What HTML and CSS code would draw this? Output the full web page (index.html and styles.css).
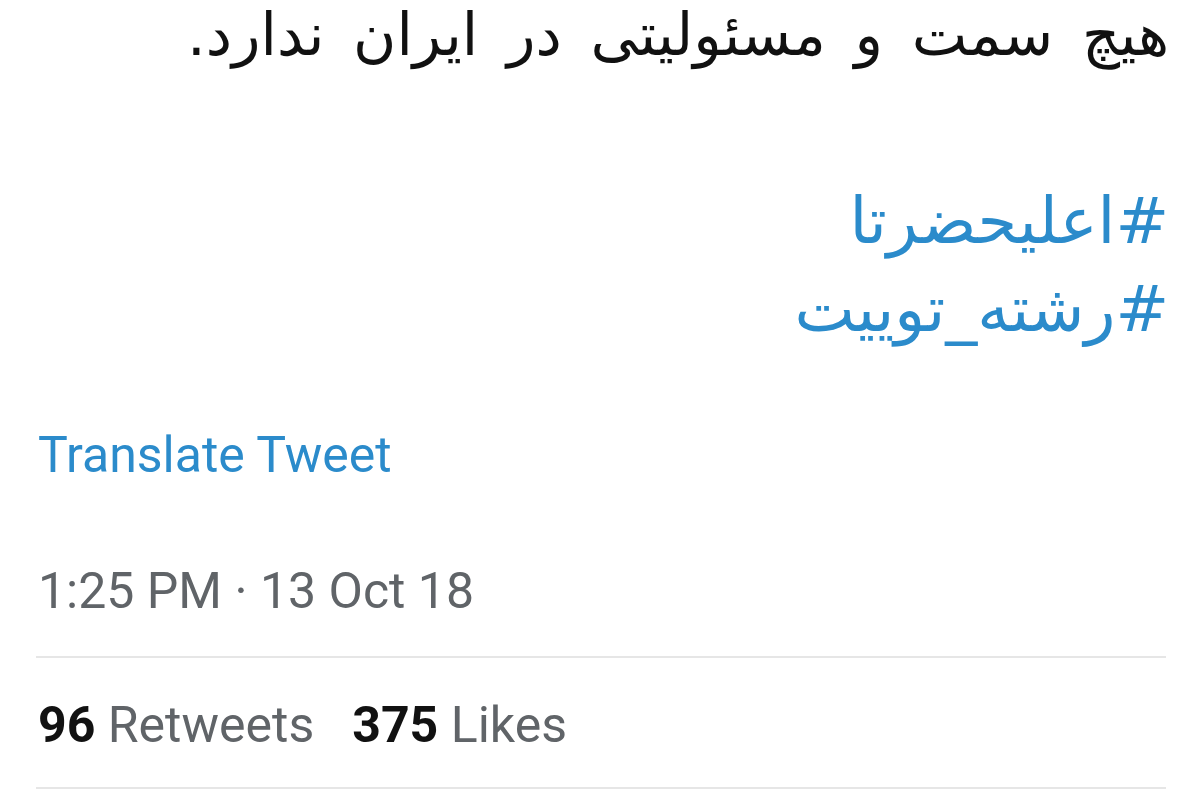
FILE: index.html
```html
<!DOCTYPE html>
<html>
 <head>
  <meta charset="utf-8">
  <title>Tweet</title>
  <link rel="stylesheet" href="styles.css">
 </head>
 <body>
  <div class="tweet">
   <div class="tweet-text" dir="rtl">
    <p class="line">هیچ سمت و مسئولیتی در ایران ندارد.</p>
    <p class="tags">
     <a class="hashtag" href="#">#اعلیحضرتا</a><br>
     <a class="hashtag" href="#">#رشته_توییت</a>
    </p>
   </div>
   <a class="translate" href="#">Translate Tweet</a>
   <div class="meta">1:25 PM · 13 Oct 18</div>
   <div class="stats">
    <span class="stat"><b>96</b> Retweets</span>
    <span class="stat"><b>375</b> Likes</span>
   </div>
  </div>
 </body>
</html>
```
FILE: styles.css
```css
body {
    margin: 0;
    background-color: #fff;
    font-family: Roboto, "Liberation Sans", sans-serif;
}

.tweet {
    width: 1130px;
    padding: 0 0 0 36px;
}

.tweet-text {
    font-family: "DejaVu Sans", sans-serif;
    color: #111;
    margin-right: -3px;
}

.line {
    margin: 0;
    font-size: 59px;
    line-height: 69px;
    word-spacing: 10px;
}

.tags {
    margin: 108px 0 0 0;
    font-size: 64px;
    line-height: 88px;
    word-spacing: 4px;
}

.hashtag {
    color: #2b8bcb;
    text-decoration: none;
}

.translate {
    display: block;
    margin-top: 72px;
    padding-left: 2px;
    font-size: 50px;
    line-height: 60px;
    color: #2b8bcb;
    text-decoration: none;
}

.meta {
    margin-top: 76px;
    padding-left: 2px;
    padding-bottom: 35px;
    font-size: 50px;
    line-height: 60px;
    color: #606468;
    border-bottom: 2px solid #e6e6e6;
}

.stats {
    display: flex;
    gap: 38px;
    padding: 37px 0 32px 2px;
    font-size: 50px;
    line-height: 60px;
    color: #606468;
    border-bottom: 2px solid #e6e6e6;
}

.stat b {
    color: #111;
    font-weight: 700;
}
```
